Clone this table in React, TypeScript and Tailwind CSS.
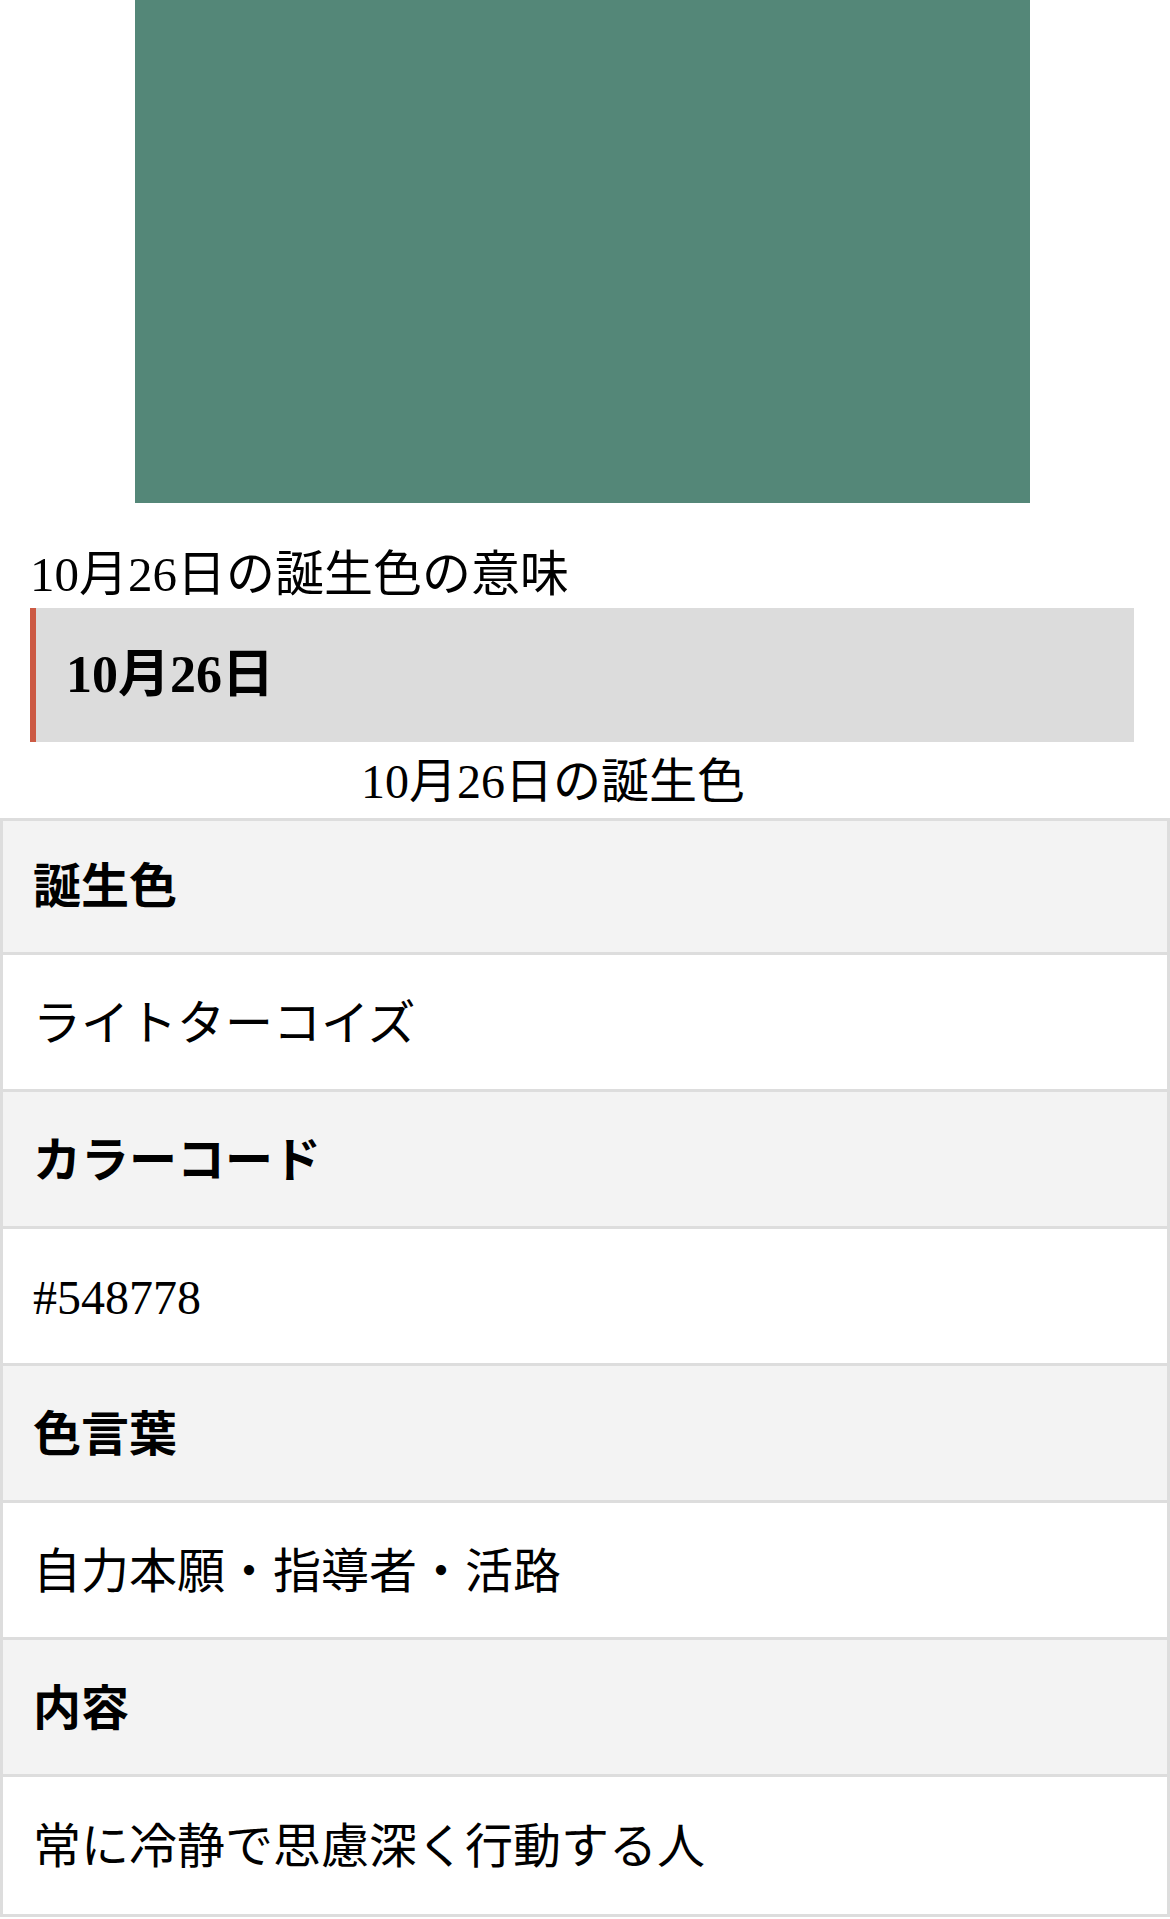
const FONT = "font-['Liberation_Serif','Noto_Sans_CJK_JP',serif]";

const rows = [
  { label: "誕生色", value: "ライトターコイズ" },
  { label: "カラーコード", value: "#548778" },
  { label: "色言葉", value: "自力本願・指導者・活路" },
  { label: "内容", value: "常に冷静で思慮深く行動する人" },
];

export default function App() {
  return (
    <div className={`w-[1170px] bg-white text-black ${FONT}`}>
      <div className="pl-[30px] pr-[36px]">
        {/* color swatch */}
        <div className="mx-auto h-[503px] w-[895px] bg-[#548778]" />

        <h3 className="pt-[43px] pb-[4px] text-[49px] leading-[58px] font-normal">
          10月26日の誕生色の意味
        </h3>

        <div className="flex h-[134px] items-center border-l-[6px] border-[#cc5a44] bg-[#dcdcdc] pl-[30px]">
          <span className="text-[52px] font-bold">10月26日</span>
        </div>
      </div>

      <div className="flex h-[76px] items-center justify-center pr-[64px] pt-[4px] text-[48px] leading-[58px]">
        10月26日の誕生色
      </div>

      <div className="flex flex-col divide-y-[3px] divide-[#dddddd] border-[3px] border-[#dddddd]">
        {rows.flatMap((r) => [
          <div
            key={r.label}
            className="flex h-[137px] items-center bg-[#f3f3f3] px-[30px] pt-[3px] text-[48px] font-bold first:h-[134px] first:pt-0"
          >
            {r.label}
          </div>,
          <div
            key={r.value}
            className="flex h-[137px] items-center bg-white px-[30px] pt-[3px] text-[48px]"
          >
            {r.value}
          </div>,
        ])}
      </div>
    </div>
  );
}
